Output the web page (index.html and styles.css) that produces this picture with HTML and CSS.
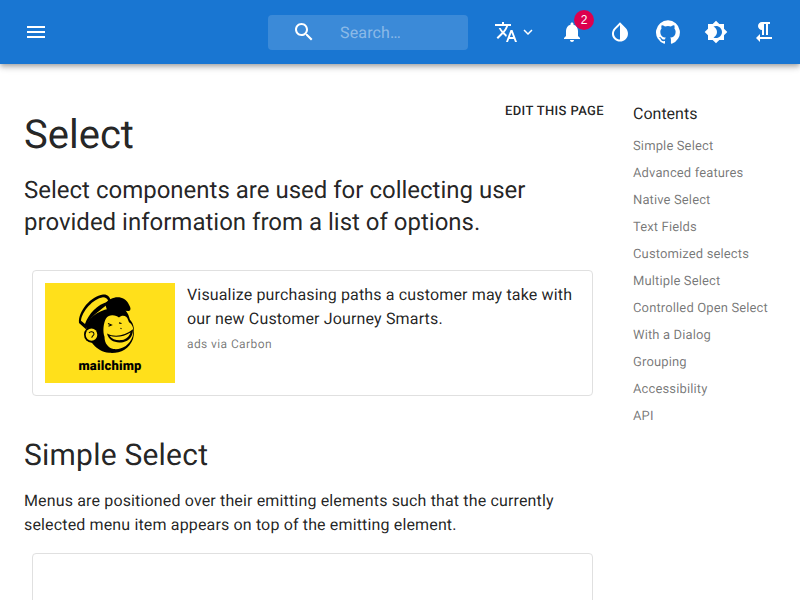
FILE: index.html
```html
<!DOCTYPE html>
<html lang="en">
<head>
    <meta charset="UTF-8">
    <title>Select React component - Material-UI</title>
    <link rel="stylesheet" href="styles.css">
</head>
<body>
    <header class="appbar">
        <button class="icon-btn menu-btn">
            <svg viewBox="0 0 24 24"><path d="M3 18h18v-2H3v2zm0-5h18v-2H3v2zm0-7v2h18V6H3z"/></svg>
        </button>
        <div class="search">
            <svg viewBox="0 0 24 24"><path d="M15.5 14h-.79l-.28-.27C15.41 12.59 16 11.11 16 9.5 16 5.91 13.09 3 9.5 3S3 5.91 3 9.5 5.91 16 9.5 16c1.61 0 3.09-.59 4.23-1.57l.27.28v.79l5 4.99L20.49 19l-4.99-5zm-6 0C7.01 14 5 11.99 5 9.5S7.01 5 9.5 5 14 7.01 14 9.5 11.99 14 9.5 14z"/></svg>
            <span class="search-text">Search…</span>
        </div>
        <button class="lang-btn">
            <svg viewBox="0 0 24 24"><path d="M12.87 15.07l-2.54-2.51.03-.03c1.74-1.94 2.98-4.17 3.71-6.53H17V4h-7V2H8v2H1v1.99h11.17C11.5 7.92 10.44 9.75 9 11.35 8.07 10.32 7.3 9.19 6.69 8h-2c.73 1.63 1.73 3.17 2.98 4.56l-5.09 5.02L4 19l5-5 3.11 3.11.76-2.04zM18.5 10h-2L12 22h2l1.12-3h4.75L21 22h2l-4.5-12zm-2.62 7l1.62-4.33L19.12 17h-3.24z"/></svg>
            <svg class="chevron" viewBox="0 0 24 24"><path d="M16.59 8.59L12 13.17 7.41 8.59 6 10l6 6 6-6z"/></svg>
        </button>
        <button class="icon-btn">
            <svg viewBox="0 0 24 24"><path d="M12 22c1.1 0 2-.9 2-2h-4c0 1.1.89 2 2 2zm6-6v-5c0-3.07-1.64-5.64-4.5-6.32V4c0-.83-.67-1.5-1.5-1.5s-1.5.67-1.5 1.5v.68C7.63 5.36 6 7.92 6 11v5l-2 2v1h16v-1l-2-2z"/></svg>
            <span class="badge">2</span>
        </button>
        <button class="icon-btn">
            <svg viewBox="0 0 24 24"><path d="M17.66 7.93L12 2.27 6.34 7.93c-3.12 3.12-3.12 8.19 0 11.31C7.9 20.8 9.95 21.58 12 21.58c2.05 0 4.1-.78 5.66-2.34 3.12-3.12 3.12-8.19 0-11.31zM12 19.59c-1.6 0-3.11-.62-4.24-1.76C6.62 16.69 6 15.19 6 13.59s.62-3.11 1.76-4.24L12 5.1v14.49z"/></svg>
        </button>
        <button class="icon-btn">
            <svg viewBox="0 0 24 24"><path d="M12 .3a12 12 0 0 0-3.8 23.38c.6.12.83-.26.83-.57L9 21.07c-3.34.72-4.04-1.61-4.04-1.61-.55-1.39-1.34-1.76-1.34-1.76-1.08-.74.09-.73.09-.73 1.2.09 1.83 1.24 1.83 1.24 1.08 1.83 2.81 1.3 3.5 1 .1-.78.42-1.31.76-1.61-2.67-.3-5.47-1.33-5.47-5.93 0-1.31.47-2.38 1.24-3.22-.14-.3-.54-1.52.1-3.18 0 0 1-.32 3.3 1.23a11.5 11.5 0 0 1 6 0c2.28-1.55 3.29-1.23 3.29-1.23.64 1.66.24 2.88.12 3.18a4.65 4.65 0 0 1 1.23 3.22c0 4.61-2.8 5.63-5.48 5.92.42.36.81 1.1.81 2.22l-.01 3.29c0 .31.2.69.82.57A12 12 0 0 0 12 .3"/></svg>
        </button>
        <button class="icon-btn">
            <svg viewBox="0 0 24 24"><path d="M20 8.69V4h-4.69L12 .69 8.69 4H4v4.69L.69 12 4 15.31V20h4.69L12 23.31 15.31 20H20v-4.69L23.31 12 20 8.69zM12 18c-.89 0-1.74-.2-2.5-.55C11.56 16.5 13 14.42 13 12s-1.44-4.5-3.5-5.45C10.26 6.2 11.11 6 12 6c3.31 0 6 2.69 6 6s-2.69 6-6 6z"/></svg>
        </button>
        <button class="icon-btn">
            <svg viewBox="0 0 24 24"><path d="M10 10v5h2V4h2v11h2V4h2V2h-8C7.79 2 6 3.79 6 6s1.79 4 4 4zm-2 7v-3l-4 4 4 4v-3h12v-2H8z"/></svg>
        </button>
    </header>

    <div class="page">
        <main class="content">
            <div class="edit-row">
                <a class="edit-link" href="#">Edit this page</a>
            </div>
            <h1>Select</h1>
            <p class="lead">Select components are used for collecting user provided information from a list of options.</p>

            <div class="ad">
                <div class="ad-logo">
                    <svg class="monkey" viewBox="0 0 130 76">
                        <g transform="translate(0 0.3) scale(1 1.07)">
                            <!-- cap -->
                            <path class="ink" d="M34 37C33 26 46 12 58 10.500c4-.5 7 2 8 6.500L50 29C45 33 42 38 41 43z"/>
                            <path class="yellow" d="M36 35C37 26 48 14.500 58 13c2.500 0 4.500 1 5.500 4C52 20 44 28 40 38z"/>
                            <path class="ink" d="M60 19C66 12 79 10 84 20c2 3 2 5 0 6L62 25z"/>
                            <!-- head -->
                            <path class="ink" d="M41 40C46 28 62 20 80 25c4 4 4 7 5 9 4 4 5 10 3 18-4 10-14 14-24 13C52 64 42 54 41 40z"/>
                            <!-- ear -->
                            <circle class="ink" cx="46.500" cy="48" r="7.500"/>
                            <circle class="yellow" cx="46.500" cy="48" r="5.800"/>
                            <path class="thin-line" d="M44 46.500c1-2 5-1.500 5 .8 0 1.700-2.200 1.700-2.200 3.700"/>
                            <!-- face -->
                            <path class="yellow" d="M61 33c3-5 11-3 13-1 3-3 8-2 9 2l1 2.500c4 2 5.500 7 3.500 13.500-3 8-11 12.500-19 11.500-5-1-9-5-9-11.500-2-5-1-13 1.500-17z"/>
                            <path class="thin-line" d="M63 37.500l3.500 1.500-3 1.200M74 37l2.500.5M75.500 42l1 .5"/>
                            <!-- grin -->
                            <path class="ink" d="M62 47c8 4 18 2 26-4 0 7-4 11-10 12-8 1-14-1-16-8z"/>
                            <path class="yellow" d="M64.500 49c6 2 15 1 21-3-1 3-4 6.500-8.500 7-5 .5-10-.5-12.500-4z"/>
                        </g>
                    </svg>
                    <span class="ad-brand">mailchimp</span>
                </div>
                <div class="ad-body">
                    <p class="ad-text">Visualize purchasing paths a customer may take with our new Customer Journey Smarts.</p>
                    <p class="ad-via">ads via Carbon</p>
                </div>
            </div>

            <h2>Simple Select</h2>
            <p class="body-text">Menus are positioned over their emitting elements such that the currently selected menu item appears on top of the emitting element.</p>
            <div class="demo"></div>
        </main>

        <nav class="toc">
            <h3>Contents</h3>
            <ul>
                <li><a href="#">Simple Select</a></li>
                <li><a href="#">Advanced features</a></li>
                <li><a href="#">Native Select</a></li>
                <li><a href="#">Text Fields</a></li>
                <li><a href="#">Customized selects</a></li>
                <li><a href="#">Multiple Select</a></li>
                <li><a href="#">Controlled Open Select</a></li>
                <li><a href="#">With a Dialog</a></li>
                <li><a href="#">Grouping</a></li>
                <li><a href="#">Accessibility</a></li>
                <li><a href="#">API</a></li>
            </ul>
        </nav>
    </div>
</body>
</html>
```

FILE: styles.css
```css
* {
    box-sizing: border-box;
}
html, body {
    height: 600px;
    overflow: hidden;
}
body {
    margin: 0;
    font-family: Roboto, "Liberation Sans", sans-serif;
    color: rgba(0, 0, 0, 0.87);
    background: #fff;
    text-rendering: geometricPrecision;
}
button {
    border: none;
    background: none;
    color: inherit;
    padding: 0;
    cursor: pointer;
}

/* app bar */
.appbar {
    height: 64px;
    display: flex;
    align-items: center;
    padding: 0 12px;
    background: #1976d2;
    color: #fff;
    box-shadow: 0 2px 4px -1px rgba(0,0,0,0.2), 0 4px 5px 0 rgba(0,0,0,0.14), 0 1px 10px 0 rgba(0,0,0,0.12);
}
.appbar svg {
    width: 24px;
    height: 24px;
    fill: currentColor;
    display: block;
}
.icon-btn {
    position: relative;
    width: 48px;
    height: 48px;
    display: flex;
    align-items: center;
    justify-content: center;
}
.menu-btn {
    margin-right: 208px;
}
.search {
    width: 200px;
    height: 35px;
    margin-right: 16px;
    padding-left: 24px;
    display: flex;
    align-items: center;
    background: rgba(255, 255, 255, 0.15);
    border-radius: 4px;
}
.search-text {
    margin-left: 24px;
    font-size: 16px;
    letter-spacing: 0.15px;
    color: rgba(255, 255, 255, 0.42);
}
.lang-btn {
    width: 56px;
    height: 48px;
    display: flex;
    align-items: center;
    padding-left: 10px;
}
.appbar .chevron {
    width: 18px;
    height: 18px;
    margin-left: 1px;
}
.lang-btn + .icon-btn {
    margin-left: 8px;
}
.badge {
    position: absolute;
    top: 2px;
    right: 2px;
    width: 20px;
    height: 20px;
    border-radius: 50%;
    background: #dc004e;
    font-size: 12px;
    line-height: 20px;
    text-align: center;
}

/* page */
.page {
    display: flex;
}
.content {
    width: 625px;
    padding: 0 24px;
}
.edit-row {
    display: flex;
    justify-content: flex-end;
    margin: 37px -3px -12px 0;
}
.edit-link {
    font-size: 13px;
    font-weight: 500;
    letter-spacing: 0.37px;
    line-height: 22px;
    text-transform: uppercase;
    text-decoration: none;
    color: rgba(0, 0, 0, 0.87);
}
h1 {
    margin: 0;
    font-size: 40px;
    font-weight: 400;
    line-height: 48px;
}
.lead {
    margin: 15px 0 0;
    font-size: 24px;
    line-height: 32px;
}
.ad {
    margin: 32px 8px 0;
    height: 126px;
    padding: 12px;
    display: flex;
    border: 1px solid #e0e0e0;
    border-radius: 4px;
}
.ad-logo {
    width: 130px;
    height: 100px;
    flex: none;
    display: flex;
    flex-direction: column;
    align-items: center;
    background: #ffe01b;
}
.monkey {
    width: 130px;
    height: 76px;
    display: block;
}
.ink {
    fill: #000;
}
.yellow {
    fill: #ffe01b;
}
.thin-line {
    fill: none;
    stroke: #000;
    stroke-width: 1;
}
.ad-brand {
    font-size: 13px;
    font-weight: 900;
    letter-spacing: 0.2px;
    line-height: 16px;
    color: #000;
}
.ad-body {
    padding-left: 12px;
}
.ad-text {
    margin: 0;
    font-size: 16px;
    line-height: 24px;
    letter-spacing: 0.15px;
}
.ad-via {
    margin: 5px 0 0;
    font-size: 12px;
    line-height: 16px;
    letter-spacing: 0.4px;
    color: rgba(0, 0, 0, 0.54);
}
h2 {
    margin: 41px 0 0;
    font-size: 30px;
    font-weight: 400;
    line-height: 38px;
    letter-spacing: 0.22px;
}
.body-text {
    margin: 14px 0 0;
    font-size: 16px;
    line-height: 24px;
    letter-spacing: 0.15px;
}
.demo {
    height: 200px;
    margin: 16px 8px 0;
    border: 1px solid #e0e0e0;
    border-radius: 4px;
}

/* table of contents */
.toc {
    width: 175px;
    padding: 40px 8px 0;
}
.toc h3 {
    margin: 0 0 7px;
    font-size: 16px;
    font-weight: 400;
    line-height: 20px;
}
.toc ul {
    margin: 0;
    padding: 0;
    list-style: none;
}
.toc li {
    padding: 4px 0;
    line-height: 19px;
    height: 27px;
}
.toc a {
    font-size: 13px;
    letter-spacing: 0.13px;
    text-decoration: none;
    color: rgba(0, 0, 0, 0.54);
}
```
